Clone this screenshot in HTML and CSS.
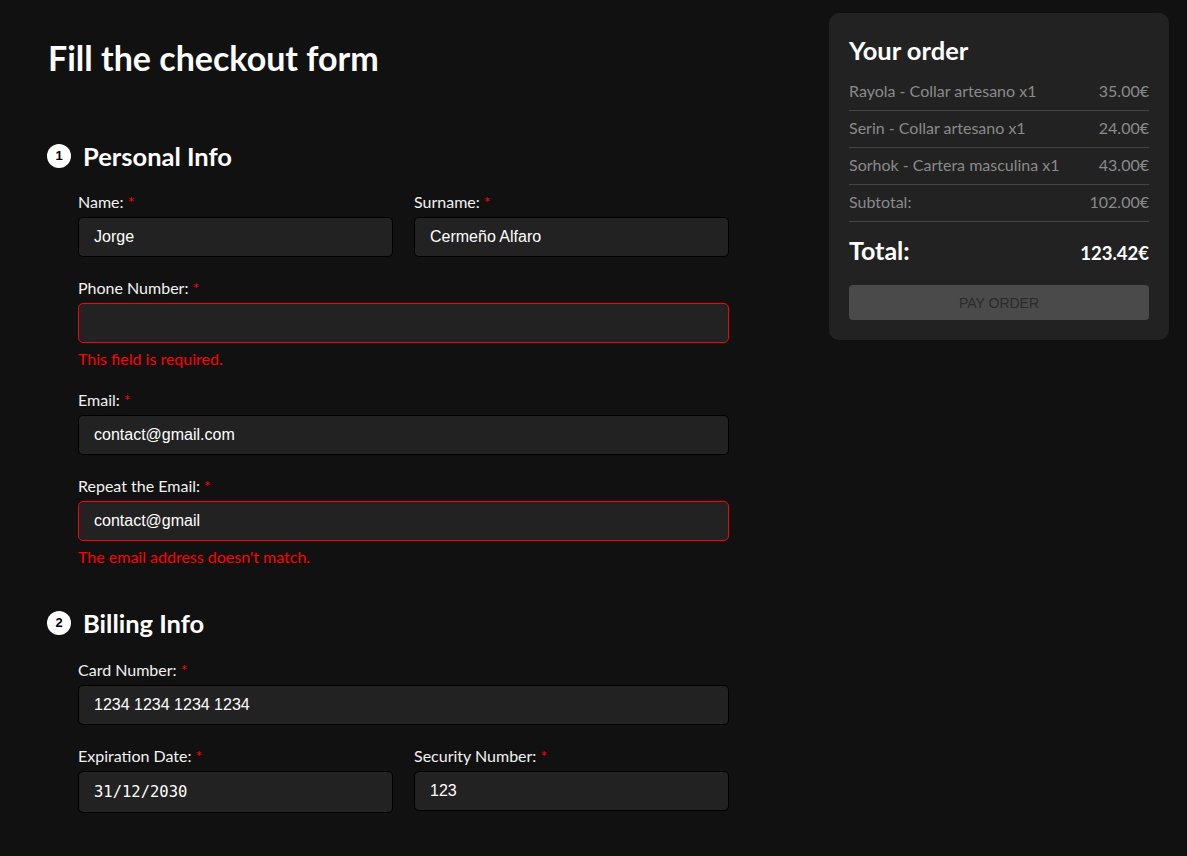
FILE: index.html
```html
<!DOCTYPE html>
<html lang="en">
<head>
<meta charset="utf-8">
<title>Checkout</title>
<link rel="stylesheet" href="styles.css">
</head>
<body>
<div class="page">
  <main class="main">
    <h1 class="title">Fill the checkout form</h1>

    <section class="section">
      <h2 class="section-head"><span class="step">1</span>Personal Info</h2>
      <div class="fields">
        <div class="row-2">
          <div class="field">
            <label class="label">Name: <span class="req">*</span></label>
            <input class="input" type="text" value="Jorge">
          </div>
          <div class="field">
            <label class="label">Surname: <span class="req">*</span></label>
            <input class="input" type="text" value="Cermeño Alfaro">
          </div>
        </div>
        <div class="field">
          <label class="label">Phone Number: <span class="req">*</span></label>
          <input class="input invalid" type="text" value="">
          <div class="error">This field is required.</div>
        </div>
        <div class="field">
          <label class="label">Email: <span class="req">*</span></label>
          <input class="input" type="text" value="contact@gmail.com">
        </div>
        <div class="field">
          <label class="label">Repeat the Email: <span class="req">*</span></label>
          <input class="input invalid" type="text" value="contact@gmail">
          <div class="error">The email address doesn't match.</div>
        </div>
      </div>
    </section>

    <section class="section">
      <h2 class="section-head"><span class="step">2</span>Billing Info</h2>
      <div class="fields">
        <div class="field">
          <label class="label">Card Number: <span class="req">*</span></label>
          <input class="input" type="text" value="1234 1234 1234 1234">
        </div>
        <div class="row-2">
          <div class="field">
            <label class="label">Expiration Date: <span class="req">*</span></label>
            <input class="input date" type="text" value="31/12/2030">
          </div>
          <div class="field">
            <label class="label">Security Number: <span class="req">*</span></label>
            <input class="input" type="text" value="123">
          </div>
        </div>
      </div>
    </section>
  </main>

  <aside class="order">
    <h2 class="order-title">Your order</h2>
    <div class="order-row"><span>Rayola - Collar artesano x1</span><span>35.00€</span></div>
    <div class="order-row"><span>Serin - Collar artesano x1</span><span>24.00€</span></div>
    <div class="order-row"><span>Sorhok - Cartera masculina x1</span><span>43.00€</span></div>
    <div class="order-row"><span>Subtotal:</span><span>102.00€</span></div>
    <div class="order-total"><span class="total-label">Total:</span><span class="total-value">123.42€</span></div>
    <button class="pay" type="button" disabled>PAY ORDER</button>
  </aside>
</div>
</body>
</html>
```

FILE: styles.css
```css
* { box-sizing: border-box; }

html, body {
  margin: 0;
  padding: 0;
  background: #111111;
  color: #ffffff;
  font-family: "Lato", "Open Sans", sans-serif;
}

.page {
  display: flex;
  align-items: flex-start;
  padding: 0 18px 0 48px;
}

.main {
  flex: 0 0 681px;
  padding-top: 38px;
  padding-bottom: 40px;
}

.title {
  margin: 0 0 64px;
  font-size: 34px;
  line-height: 40px;
  font-weight: 700;
}

.section + .section { margin-top: 42px; }

.section-head {
  display: flex;
  align-items: center;
  gap: 12px;
  margin: -1px 0 21px -1px;
  font-size: 25.5px;
  line-height: 30px;
  font-weight: 700;
}

.section + .section .section-head { margin-bottom: 22px; }

.step {
  flex: 0 0 24px;
  width: 24px;
  height: 24px;
  border-radius: 50%;
  background: #ffffff;
  color: #000000;
  font-size: 13px;
  font-weight: 700;
  display: flex;
  align-items: center;
  justify-content: center;
  font-family: "Liberation Sans", Arial, sans-serif;
}

.fields {
  margin-left: 30px;
  display: flex;
  flex-direction: column;
  gap: 21px;
  width: 651px;
}

.row-2 {
  display: grid;
  grid-template-columns: 1fr 1fr;
  gap: 21px;
}

.field {
  display: flex;
  flex-direction: column;
}

.label {
  font-size: 16px;
  line-height: 20px;
  color: #f2f2f2;
  margin-bottom: 5px;
}

.req { color: #ff0000; }

.input {
  height: 40px;
  width: 100%;
  background: #222222;
  border: 1px solid #000000;
  border-radius: 5px;
  color: #ffffff;
  font-family: "Liberation Sans", Arial, sans-serif;
  font-size: 16px;
  padding: 0 15px;
  outline: none;
}

.input.invalid {
  border-color: #ff0000;
}

.input.date {
  font-family: "DejaVu Sans Mono", "Liberation Mono", monospace;
  font-size: 15.5px;
  height: 42px;
}

.error {
  color: #ff0000;
  font-size: 16px;
  line-height: 20px;
  margin-top: 6px;
}

.order {
  flex: 0 0 340px;
  margin-top: 13px;
  margin-left: 100px;
  background: #222222;
  border-radius: 10px;
  padding: 20px;
}

.order-title {
  margin: 0 0 7px;
  font-size: 25.5px;
  line-height: 34px;
  font-weight: 700;
}

.order-row {
  display: flex;
  justify-content: space-between;
  font-size: 16px;
  line-height: 20px;
  color: #8a8a8a;
  padding: 7px 0 9px;
  border-bottom: 1px solid #444444;
}

.order-total {
  display: flex;
  justify-content: space-between;
  align-items: baseline;
  padding: 13px 0 0;
  height: 63px;
}

.total-label {
  font-size: 25px;
  line-height: 30px;
  font-weight: 700;
}

.total-value {
  font-size: 18.5px;
  font-weight: 700;
}

.pay {
  display: block;
  width: 100%;
  height: 35px;
  border: none;
  border-radius: 4px;
  background: #4a4a4a;
  color: #2a2a2a;
  font-family: "Liberation Sans", Arial, sans-serif;
  font-size: 14px;
}
```
